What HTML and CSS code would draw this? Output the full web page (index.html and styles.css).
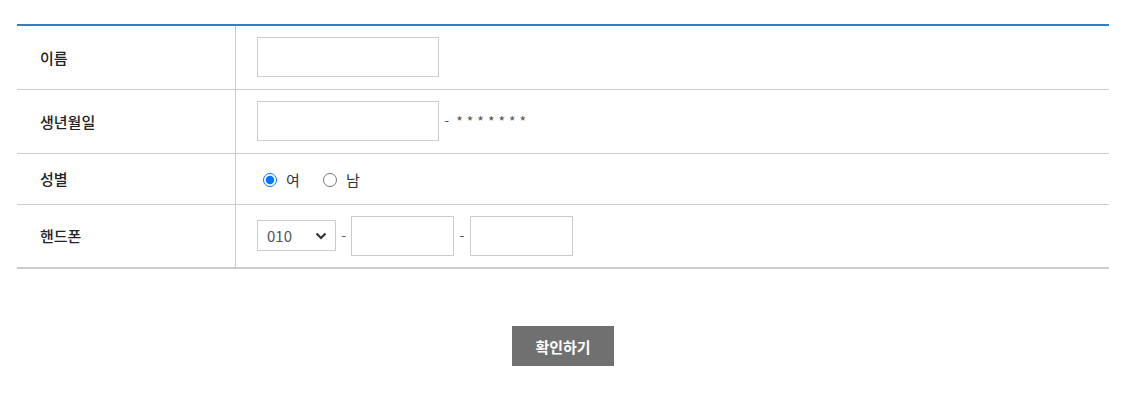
FILE: index.html
```html
<!DOCTYPE html>
<html lang="ko">
<head>
    <meta charset="UTF-8">
    <meta name="viewport" content="width=device-width, initial-scale=1.0">
    <title>본인확인</title>
    <link rel="stylesheet" href="styles.css">
</head>
<body>

    <div class="container">
        <form id="infoForm">
            <table class="form-table">
                <tr class="row-tall">
                    <th>이름</th>
                    <td><input type="text" class="input-md" name="name"></td>
                </tr>
                <tr class="row-tall">
                    <th>생년월일</th>
                    <td>
                        <input type="text" class="input-md" name="birth">
                        <span class="sep">-</span>
                        <span class="mask">*******</span>
                    </td>
                </tr>
                <tr class="row-short">
                    <th>성별</th>
                    <td>
                        <label class="radio"><input type="radio" name="gender" value="F" checked> 여</label>
                        <label class="radio"><input type="radio" name="gender" value="M"> 남</label>
                    </td>
                </tr>
                <tr class="row-tall">
                    <th>핸드폰</th>
                    <td>
                        <span class="select-wrap">
                            <select name="phone1">
                                <option>010</option>
                                <option>011</option>
                                <option>016</option>
                                <option>017</option>
                            </select>
                            <svg class="chevron" width="12" height="8" viewBox="0 0 12 8">
                                <path d="M1.5 1.5 L6 6 L10.5 1.5" fill="none" stroke="#333" stroke-width="2.2"/>
                            </svg>
                        </span>
                        <span class="sep">-</span>
                        <input type="text" class="input-sm" name="phone2">
                        <span class="sep">-</span>
                        <input type="text" class="input-sm" name="phone3">
                    </td>
                </tr>
            </table>

            <div class="actions">
                <button type="submit">확인하기</button>
            </div>
        </form>
    </div>

</body>
</html>
```

FILE: styles.css
```css
body {
    font-family: "Noto Sans CJK KR", "Noto Sans", sans-serif;
    margin: 0;
    padding: 0;
    background-color: #fff;
    color: #333;
}

.container {
    width: 1092px;
    margin: 24px 0 0 17px;
}

.form-table {
    width: 100%;
    border-collapse: collapse;
    border-top: 2px solid #2b80c8;
    border-bottom: 2px solid #ccc;
}

.form-table tr {
    border-bottom: 1px solid #ccc;
}

.row-tall {
    height: 64px;
}

.row-short {
    height: 51px;
}

.form-table th {
    width: 195px;
    padding: 0 0 0 23px;
    text-align: left;
    font-size: 15px;
    font-weight: 500;
    color: #222;
    border-right: 1px solid #ccc;
}

.form-table td {
    padding: 0 0 0 21px;
    font-size: 15px;
}

.form-table td > * {
    vertical-align: middle;
}

input[type="text"] {
    box-sizing: border-box;
    height: 40px;
    border: 1px solid #ccc;
    padding: 0 10px;
    font-size: 15px;
    margin: 0;
}

.input-md {
    width: 182px;
}

.input-sm {
    width: 103px;
}

.sep {
    display: inline-block;
    margin: 0 1px 0 1px;
    color: #555;
    font-size: 14px;
}

.mask {
    font-size: 14px;
    color: #555;
    letter-spacing: 4px;
    margin-left: 2px;
}

.radio {
    display: inline-flex;
    align-items: center;
    margin-left: 6px;
    margin-right: 13px;
    font-size: 15px;
    color: #333;
}

.radio input {
    margin: 0 9px 0 0;
    width: 14px;
    height: 14px;
}

.select-wrap {
    position: relative;
    display: inline-block;
}

select {
    appearance: none;
    -webkit-appearance: none;
    box-sizing: border-box;
    width: 79px;
    height: 31px;
    border: 1px solid #ccc;
    background: #fff;
    padding: 0 0 0 9px;
    font-family: inherit;
    font-size: 15px;
    color: #555;
    border-radius: 0;
}

.chevron {
    position: absolute;
    right: 9px;
    top: 12px;
    pointer-events: none;
}

.actions {
    text-align: center;
    margin-top: 57px;
}

button {
    width: 102px;
    height: 40px;
    border: none;
    background-color: #707070;
    color: #fff;
    font-family: inherit;
    font-size: 15px;
    font-weight: bold;
    cursor: pointer;
}

button:hover {
    background-color: #555;
}
```
